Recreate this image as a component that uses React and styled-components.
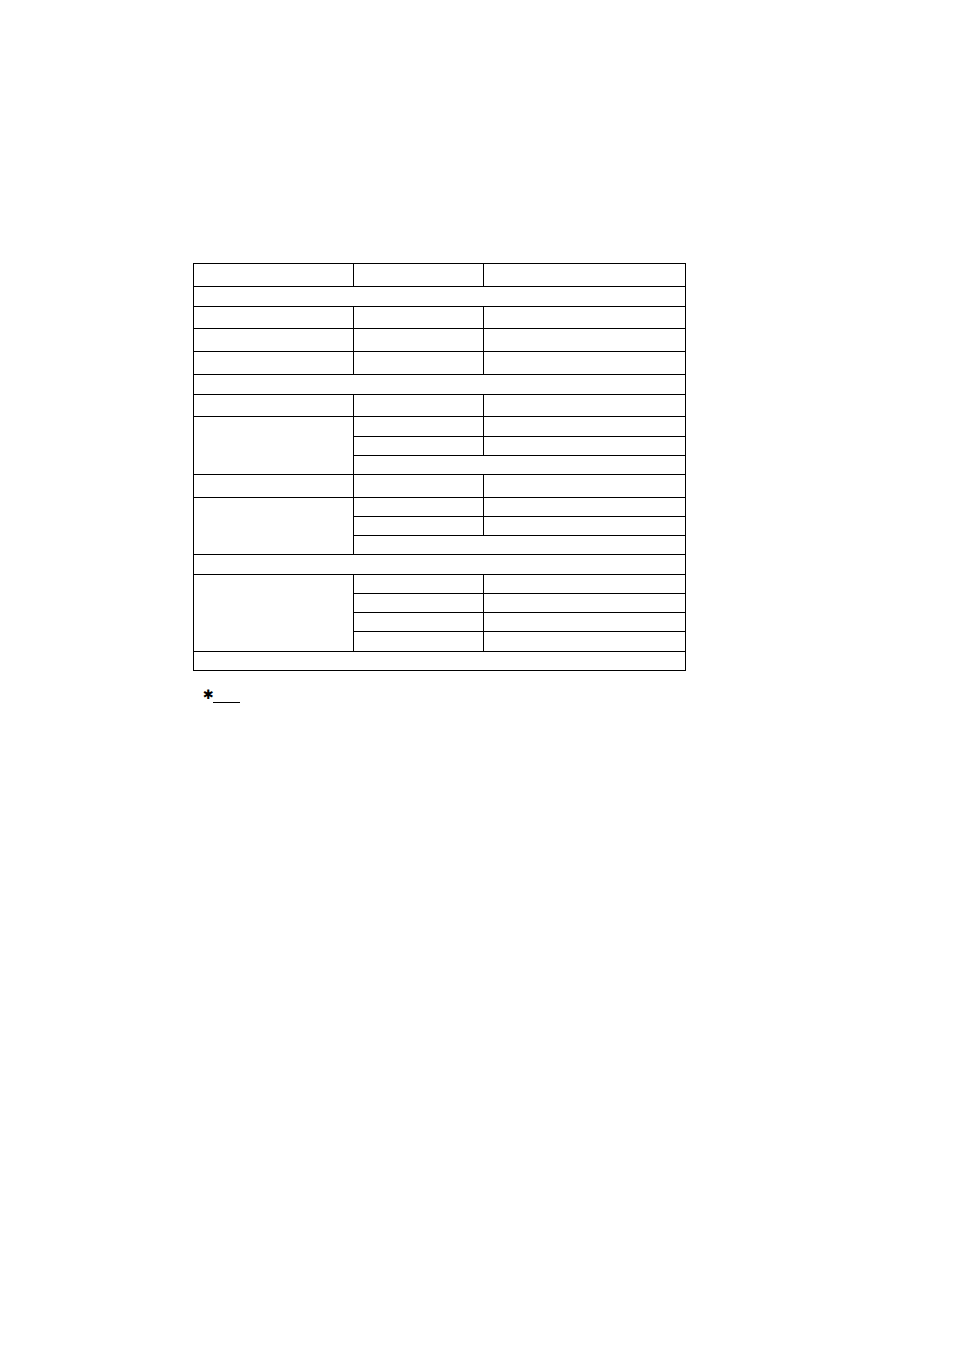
import React from "react";
import styled, { createGlobalStyle } from "styled-components";

const GlobalStyle = createGlobalStyle`
  html, body {
    margin: 0;
    padding: 0;
    background: #ffffff;
  }
  body {
    font-family: "Liberation Sans", Arial, sans-serif;
    color: #000;
  }
`;

const Page = styled.div`
  width: 954px;
  min-height: 1351px;
  padding: 263px 0 0 193px;
  box-sizing: border-box;
`;

const Grid = styled.div`
  display: grid;
  width: 493px;
  grid-template-columns: 160px 130px 202px;
  grid-template-rows: ${(p) => p.rows.map((h) => `${h}px`).join(" ")};
  border-left: 1px solid #000;
  border-top: 1px solid #000;
  box-sizing: border-box;
`;

const Cell = styled.div`
  grid-column: ${(p) => (p.span ? `span ${p.span}` : "auto")};
  grid-row: ${(p) => (p.rowSpan ? `span ${p.rowSpan}` : "auto")};
  border-right: 1px solid #000;
  border-bottom: 1px solid #000;
  font-size: 12px;
  padding: 0 4px;
`;

const Note = styled.div`
  display: flex;
  align-items: flex-end;
  margin: 18px 0 0 10px;
  height: 14px;
`;

const Star = styled.span`
  font-family: "DejaVu Sans", sans-serif;
  font-variant-emoji: text;
  font-size: 13px;
  line-height: 12px;
  color: #000;
  margin-bottom: 2px;
`;

const Blank = styled.span`
  display: inline-block;
  width: 27px;
  height: 1px;
  margin-left: -1px;
  border-bottom: 1px solid #000;
`;

const rowHeights = [
  23, 20, 22, 23, 23, 20, 22, 20, 19, 19, 23, 19, 19, 19, 20, 19, 19, 19, 20, 19,
];

const Triple = () => (
  <>
    <Cell />
    <Cell />
    <Cell />
  </>
);

export default function App() {
  return (
    <>
      <GlobalStyle />
      <Page>
        <Grid rows={rowHeights}>
          <Triple />
          <Cell span={3} />
          <Triple />
          <Triple />
          <Triple />
          <Cell span={3} />
          <Triple />

          <Cell rowSpan={3} />
          <Cell />
          <Cell />
          <Cell />
          <Cell />
          <Cell span={2} />

          <Triple />

          <Cell rowSpan={3} />
          <Cell />
          <Cell />
          <Cell />
          <Cell />
          <Cell span={2} />

          <Cell span={3} />

          <Cell rowSpan={4} />
          <Cell />
          <Cell />
          <Cell />
          <Cell />
          <Cell />
          <Cell />
          <Cell />
          <Cell />

          <Cell span={3} />
        </Grid>
        <Note>
          <Star>{"\u2731\uFE0E"}</Star>
          <Blank />
        </Note>
      </Page>
    </>
  );
}
